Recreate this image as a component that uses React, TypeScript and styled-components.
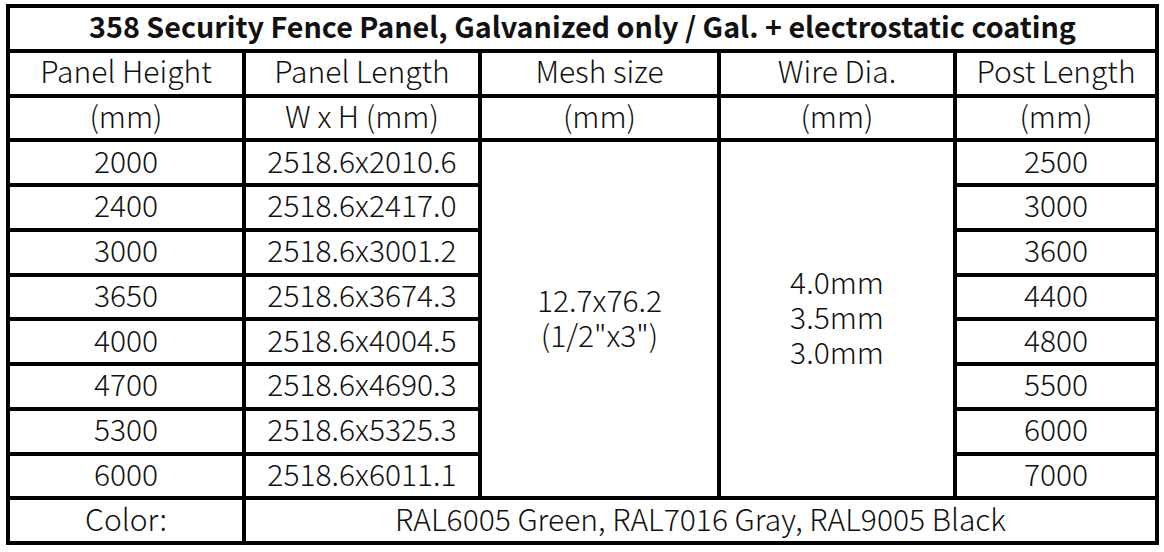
import React from "react";
import styled, { createGlobalStyle } from "styled-components";

const GlobalStyle = createGlobalStyle`
	html, body {
		margin: 0;
		padding: 0;
		background: #ffffff;
	}
`;

const Page = styled.div`
	padding: 4px 0 0 6px;
`;

const Table = styled.div`
	display: grid;
	grid-template-columns: 232px 232px 235px 232px 198px;
	grid-template-rows: repeat(12, 1fr);
	gap: 4px;
	padding: 4px;
	width: 1153px;
	height: 541px;
	box-sizing: border-box;
	background: #000000;
	font-family: "Noto Sans CJK SC", "Noto Sans", sans-serif;
	font-weight: 300;
	color: #111111;
`;

const Cell = styled.div<{ $span?: number; $rows?: number; $bold?: boolean }>`
	background: #ffffff;
	display: flex;
	flex-direction: column;
	align-items: center;
	justify-content: center;
	text-align: center;
	line-height: 35px;
	padding-bottom: 5px;
	box-sizing: border-box;
	white-space: nowrap;
	grid-column: span ${(p) => p.$span ?? 1};
	grid-row: span ${(p) => p.$rows ?? 1};
	font-weight: ${(p) => (p.$bold ? 700 : 300)};
	font-size: ${(p) => (p.$bold ? "28.7px" : "30px")};
`;

const heights = ["2000", "2400", "3000", "3650", "4000", "4700", "5300", "6000"];
const lengths = [
	"2518.6x2010.6",
	"2518.6x2417.0",
	"2518.6x3001.2",
	"2518.6x3674.3",
	"2518.6x4004.5",
	"2518.6x4690.3",
	"2518.6x5325.3",
	"2518.6x6011.1",
];
const posts = ["2500", "3000", "3600", "4400", "4800", "5500", "6000", "7000"];

const App: React.FC = () => {
	return (
		<Page>
			<GlobalStyle />
			<Table>
				<Cell $span={5} $bold>
					358 Security Fence Panel, Galvanized only / Gal. + electrostatic coating
				</Cell>
				<Cell>Panel Height</Cell>
				<Cell>Panel Length</Cell>
				<Cell>Mesh size</Cell>
				<Cell>Wire Dia.</Cell>
				<Cell>Post Length</Cell>
				<Cell>(mm)</Cell>
				<Cell>W x H (mm)</Cell>
				<Cell>(mm)</Cell>
				<Cell>(mm)</Cell>
				<Cell>(mm)</Cell>
				{heights.map((h, i) => (
					<React.Fragment key={h}>
						<Cell>{h}</Cell>
						<Cell>{lengths[i]}</Cell>
						{i === 0 && (
							<>
								<Cell $rows={8}>
									<span>12.7x76.2</span>
									<span>(1/2"x3")</span>
								</Cell>
								<Cell $rows={8}>
									<span>4.0mm</span>
									<span>3.5mm</span>
									<span>3.0mm</span>
								</Cell>
							</>
						)}
						<Cell>{posts[i]}</Cell>
					</React.Fragment>
				))}
				<Cell>Color:</Cell>
				<Cell $span={4}>RAL6005 Green, RAL7016 Gray, RAL9005 Black</Cell>
			</Table>
		</Page>
	);
};

export default App;
